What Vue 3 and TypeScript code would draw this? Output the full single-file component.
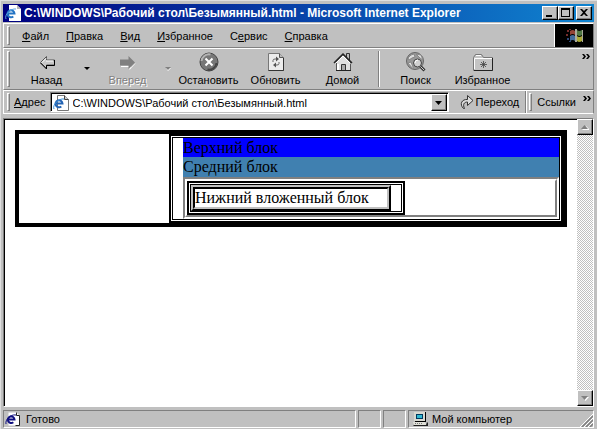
<script setup lang="ts">
import { ref } from 'vue'

interface MenuEntry {
  before: string
  key: string
  after: string
}

const path = 'C:\\WINDOWS\\Рабочий стол\\Безымянный.html'
const address = ref(path)
const menu: MenuEntry[] = [
  { before: '', key: 'Ф', after: 'айл' },
  { before: '', key: 'П', after: 'равка' },
  { before: '', key: 'В', after: 'ид' },
  { before: '', key: 'И', after: 'збранное' },
  { before: 'С', key: 'е', after: 'рвис' },
  { before: '', key: 'С', after: 'правка' },
]
</script>

<template>
  <div class="window">
    <header class="title">
      <svg class="doc" viewBox="0 0 16 16" width="16" height="16">
        <path d="M4 0h8l4 4v12H4z" fill="#fff" />
        <path d="M12 0v4h4z" fill="#b8b8b8" />
        <path d="M3 8.500h6.500a3.500 3.500 0 1 0-1.200 3" fill="none" stroke="#2474c4" stroke-width="2" />
        <path d="M1 14C-1 10 6 3 11 4" fill="none" stroke="#5aa4e0" stroke-width="1" />
      </svg>
      <h1>{{ path }} - Microsoft Internet Explorer</h1>
      <div class="caption">
        <button class="raised" aria-label="Свернуть"><svg viewBox="0 0 12 10" width="12" height="10"><path d="M2 7h6v2H2z" /></svg></button>
        <button class="raised" aria-label="Развернуть"><svg viewBox="0 0 12 10" width="12" height="10"><path d="M1 0h9v9H1zM2 2v6h7V2z" fill-rule="evenodd" /></svg></button>
        <button class="raised close" aria-label="Закрыть"><svg viewBox="0 0 12 10" width="12" height="10"><path d="M2 1h2l2 2 2-2h2L7 4.500 10 8H8L6 6 4 8H2l3-3.500z" /></svg></button>
      </div>
    </header>

    <nav class="menu">
      <i class="grip"></i>
      <button v-for="m in menu" :key="m.key + m.after">{{ m.before }}<u>{{ m.key }}</u>{{ m.after }}</button>
      <div class="throbber">
        <svg viewBox="0 0 38 22" width="38" height="22">
          <g opacity=".85">
            <path d="M12 5h2v2h-2zM11 9h2v2h-2zM14 4h2v1h-2z" fill="#8a3434" />
            <path d="M12 13h2v2h-2zM14 16h2v1h-2z" fill="#345490" />
            <path d="M15 6q3-2 5 0v4q-2-2-5 0z" fill="#b05040" />
            <path d="M22 5q2 2 5 0v5q-3 2-5 0z" fill="#609050" />
            <path d="M15 11q3-2 5 0v5q-2-2-5 0z" fill="#5080b8" />
            <path d="M22 11q2 2 5 0v5q-3 2-5 0z" fill="#c8c840" />
            <path d="M20 4h2v13h-2zM27 5h1v12h-1z" fill="#c8c8b8" />
          </g>
        </svg>
      </div>
    </nav>

    <div class="tools">
      <i class="grip"></i>
      <button class="tool">
        <svg viewBox="0 0 20 20" width="20" height="20">
          <path d="M3.500 10.500l6-6v3.500h8v5h-8v3.500z" fill="#c8c8c8" stroke="#555" />
          <path d="M3.500 11l6 6v-3.500h8V8" fill="none" stroke="#000" />
          <path d="M5 10.500L9 6.500M9 9h7" stroke="#fff" fill="none" />
        </svg>
        Назад
      </button>
      <button class="more" aria-label="Список назад"><svg viewBox="0 0 6 4" width="6" height="4"><path d="M0 0h6L3 3z" /></svg></button>
      <button class="tool off" disabled>
        <svg viewBox="0 0 20 20" width="20" height="20">
          <path d="M18 11l-6.500 7v-3H3v-1h9.500v2l4-4z" fill="#fff" />
          <path d="M17 10.500L10.500 4v3.500H2v6h8.500V17z" fill="#808080" />
        </svg>
        Вперед
      </button>
      <button class="more off" disabled aria-label="Список вперед"><svg viewBox="0 0 6 4" width="6" height="4"><path d="M1 1h5L3 4z" fill="#fff" /><path d="M0 0h6L3 3z" fill="#808080" /></svg></button>
      <button class="tool">
        <svg viewBox="0 0 20 20" width="20" height="20">
          <circle cx="10" cy="10" r="9" fill="#777" stroke="#444" />
          <path d="M2.500 9a7.500 7.500 0 0 1 9-6.500" stroke="#b4b4b4" fill="none" stroke-width="2" />
          <path d="M17.500 11a7.500 7.500 0 0 1-9 6.500" stroke="#444" fill="none" stroke-width="2" />
          <path d="M6.500 6.500l7 7M13.500 6.500l-7 7" stroke="#fff" stroke-width="2" />
        </svg>
        Остановить
      </button>
      <button class="tool">
        <svg viewBox="0 0 20 20" width="20" height="20">
          <path d="M2.500 1.500h11l4 4v13h-15z" fill="#ececec" stroke="#777" />
          <path d="M2.500 18.500h15V6" fill="none" stroke="#333" />
          <path d="M13.500 1.500v4h4" fill="#bbb" stroke="#555" />
          <path d="M7 10V8.500Q7 7 9 7h1M13 10v1.500q0 1.500-2 1.500h-1" fill="none" stroke="#666" />
          <path d="M10 4.500l3 2.500-3 2.500zM10 10.500L7 13l3 2.500z" fill="#555" />
        </svg>
        Обновить
      </button>
      <button class="tool">
        <svg viewBox="0 0 20 20" width="20" height="20">
          <path d="M13.500 1.500h3v7h-3z" fill="#bbb" stroke="#333" />
          <path d="M3.500 10v8.500h14V10l-7-7z" fill="#e0e0e0" stroke="#555" />
          <path d="M1 11l9-9 9 9" fill="none" stroke="#222" stroke-width="1.500" />
          <path d="M2.500 11.500l7.500-7.500 7.500 7.500" fill="none" stroke="#fff" />
          <path d="M8.500 12.500h4v6h-4z" fill="#aaa" stroke="#333" />
          <path d="M5 12v6" stroke="#fff" stroke-width="2" />
          <path d="M3 18.500h15" stroke="#222" />
        </svg>
        Домой
      </button>
      <i class="rule"></i>
      <button class="tool">
        <svg viewBox="0 0 20 20" width="20" height="20">
          <circle cx="9" cy="9" r="8.500" fill="#999" stroke="#666" />
          <path d="M2 6q3-4 6-4l1 3-3 1-3 2zM10 2l5 1 2 5-3-2zM2 11l3-1 2 5v2z" fill="#ddd" stroke="#888" />
          <circle cx="11.500" cy="11" r="4" fill="#d0d0d0" stroke="#444" />
          <path d="M9 11a3 3 0 0 1 3-3" fill="none" stroke="#fff" />
          <path d="M14.500 14.500l4 4" stroke="#333" stroke-width="3" />
          <path d="M14.500 14.500l3.500 3.500" stroke="#ccc" />
        </svg>
        Поиск
      </button>
      <button class="tool">
        <svg viewBox="0 0 20 20" width="20" height="20">
          <path d="M.500 18.500v-13l2-3h6l2 3h9v13z" fill="#c4c4c4" stroke="#777" />
          <path d="M1.500 17V6.500H19M3 3.500h5" fill="none" stroke="#fff" />
          <path d="M1 18.500h18.500V6" fill="none" stroke="#222" />
          <path d="M10.500 9v7M7 12.500h7M8 10l5 5M13 10l-5 5" stroke="#444" stroke-width=".8" />
        </svg>
        Избранное
      </button>
      <button class="chev" aria-label="Другие кнопки"><svg viewBox="0 0 8 5" width="8" height="5"><path d="M0 0h2l2 2.500L2 5H0l2-2.500zM4 0h2l2 2.500L6 5H4l2-2.500z" /></svg></button>
    </div>

    <form class="address" @submit.prevent>
      <i class="grip"></i>
      <label for="url"><u>А</u>дрес</label>
      <div class="field">
        <svg class="doc" viewBox="0 0 16 16" width="16" height="16">
          <path d="M4.500.500h7l4 4v11h-11z" fill="#fff" stroke="#777" />
          <path d="M11.500.500v4h4" fill="#ccc" stroke="#444" />
          <path d="M3 8.500h6.500a3.500 3.500 0 1 0-1.200 3" fill="none" stroke="#2464b4" stroke-width="2" />
          <path d="M1 14C-1 10 6 3 11 4" fill="none" stroke="#3a90d8" stroke-width="1" />
        </svg>
        <input id="url" v-model="address" type="text" spellcheck="false" />
        <button type="button" class="raised drop" aria-label="Журнал адресов"><svg viewBox="0 0 7 4" width="7" height="4"><path d="M0 0h7L3.500 4z" /></svg></button>
      </div>
      <button type="submit" class="go">
        <svg viewBox="0 0 14 16" width="14" height="16">
          <path d="M3.500 14.500C-1 10 2 5 7.500 5.500v-4l5.500 5-5.500 5v-3.500C4 8 2.500 10.500 4.500 14.500z" fill="#ddd" stroke="#333" />
        </svg>
        Переход
      </button>
      <i class="edge"></i>
      <i class="grip"></i>
      <a class="links" href="#">Ссылки</a>
      <button type="button" class="chev" aria-label="Другие ссылки"><svg viewBox="0 0 8 5" width="8" height="5"><path d="M0 0h2l2 2.500L2 5H0l2-2.500zM4 0h2l2 2.500L6 5H4l2-2.500z" /></svg></button>
    </form>

    <div class="view">
      <main>
        <div class="outer">
          <div class="double column">
            <div class="top">Верхний блок</div>
            <div class="middle">Средний блок</div>
            <div class="groove"><div class="groove-in">
              <div class="double nested">
                <div class="ridge"><div class="ridge-in">Нижний вложенный блок</div></div>
              </div>
            </div></div>
          </div>
        </div>
      </main>
      <div class="scroll">
        <button class="raised" disabled aria-label="Вверх"><svg viewBox="0 0 8 5" width="8" height="5"><path d="M1 5h7v-1L5 1z" fill="#fff" /><path d="M0 4h7L3.500 0z" fill="#808080" /></svg></button>
        <button class="raised" disabled aria-label="Вниз"><svg viewBox="0 0 8 5" width="8" height="5"><path d="M1 1h7L4.500 5z" fill="#fff" /><path d="M0 0h7L3.500 4z" fill="#808080" /></svg></button>
      </div>
    </div>

    <footer class="status">
      <div class="pane message">
        <svg viewBox="0 0 16 16" width="16" height="16">
          <path d="M3.500 1.500h8l3 3v10h-11z" fill="#fff" />
          <path d="M11.500 1.500v3h3v10h-4" fill="none" stroke="#222" />
          <path d="M3 8.500h6.500a3.300 3.300 0 1 0-1.200 2.800" fill="none" stroke="#101080" stroke-width="2" />
          <path d="M1 13C0 9 5 3 11 4" fill="none" stroke="#101080" />
        </svg>
        Готово
      </div>
      <div class="pane small"></div>
      <div class="pane small"></div>
      <div class="pane zone">
        <svg viewBox="0 0 16 16" width="16" height="16">
          <path d="M2 1h11v9H2z" fill="#d8d8d0" />
          <path d="M13 1h1v10H3v-1h10z" />
          <path d="M4 3h7v5H4z" fill="#003860" />
          <path d="M5 4h5v3H5z" fill="#30b8d0" />
          <path d="M1 11h12l2 3H2z" fill="#e0e0d8" />
          <path d="M1 14h13l1-3 1 1v3H2z" fill="#222" />
          <path d="M3 12.500h8" stroke="#777" stroke-dasharray="1 1" />
        </svg>
        <span>Мой компьютер</span>
        <svg class="size" viewBox="0 0 13 13" width="13" height="13">
          <path d="M0 13L13 0M4 13l9-9M8 13l5-5" stroke="#fff" />
          <path d="M2 13L13 2M6 13l7-7M10 13l3-3" stroke="#808080" stroke-width="1.500" />
        </svg>
      </div>
    </footer>
  </div>
</template>

<style>
body {
  margin: 0;
  background: #c0c0c0;
}
</style>

<style scoped>
* {
  box-sizing: border-box;
}

.window {
  display: flex;
  flex-direction: column;
  height: 100vh;
  padding: 3px 3px 1px 2px;
  border-top: 1px solid #dfdfdf;
  border-left: 1px solid #dfdfdf;
  background: #c0c0c0;
  color: #000;
  font: 11px/14px "Liberation Sans", Arial, sans-serif;
  overflow: hidden;
}

button {
  margin: 0;
  padding: 0;
  border: 0;
  background: none;
  color: inherit;
  font: inherit;
}

svg {
  display: block;
  flex: none;
}

.raised {
  display: flex;
  align-items: center;
  justify-content: center;
  background: #c0c0c0;
  border: 1px solid;
  border-color: #fff #000 #000 #fff;
  box-shadow: inset -1px -1px #808080;
}

.grip {
  flex: none;
  align-self: stretch;
  width: 3px;
  margin: 2px 0 2px 4px;
  border: 1px solid;
  border-color: #fff #808080 #808080 #fff;
}

.title {
  display: flex;
  align-items: center;
  flex: none;
  height: 18px;
  padding: 0 2px;
  background: linear-gradient(90deg, #000080, #1084d0);
  color: #fff;
}

h1 {
  flex: 1;
  margin: 0 0 0 3px;
  font-size: 12px;
  font-weight: bold;
  line-height: 18px;
  white-space: nowrap;
  overflow: hidden;
}

.caption {
  display: flex;
}

.caption .raised {
  width: 16px;
  height: 14px;
}

.caption .close {
  margin-left: 2px;
}

.menu {
  display: flex;
  align-items: center;
  gap: 17px;
  flex: none;
  height: 25px;
  margin-top: 1px;
  border: 1px solid;
  border-color: #fff #808080 #808080 #fff;
}

.menu .grip {
  margin-right: -5px;
  margin-left: 3px;
}

.menu .throbber {
  display: flex;
  align-items: center;
  justify-content: center;
  align-self: stretch;
  width: 39px;
  margin-left: auto;
  border-left: 1px solid #fff;
  background: #000;
}

.tools {
  display: flex;
  flex: none;
  height: 42px;
  border: 1px solid;
  border-color: #fff #808080 #808080 #fff;
}

.tools .grip {
  margin-left: 3px;
  margin-right: 3px;
}

.tool {
  display: flex;
  flex-direction: column;
  align-items: center;
  gap: 1px;
  width: 67px;
  padding-top: 3px;
  white-space: nowrap;
}

.off {
  color: #808080;
  text-shadow: 1px 1px #fff;
}

.more {
  display: flex;
  align-items: center;
  justify-content: center;
  width: 14px;
}

.rule,
.edge {
  width: 2px;
  margin: 2px;
  border-left: 1px solid #808080;
  border-right: 1px solid #fff;
}

.chev {
  align-self: flex-start;
  margin-left: auto;
  padding: 5px 3px;
}

.address {
  display: flex;
  align-items: center;
  flex: none;
  height: 24px;
  border: 1px solid;
  border-color: #fff #808080 #fff #fff;
}

.address > .grip {
  margin-left: 3px;
}

label {
  margin: 0 4px;
}

.field {
  display: flex;
  align-items: center;
  flex: 1;
  min-width: 0;
  height: 20px;
  border: 1px solid;
  border-color: #808080 #fff #fff #808080;
  box-shadow: inset 1px 1px #000;
  background: #fff;
  padding: 1px 1px 0 2px;
}

input {
  flex: 1;
  min-width: 0;
  margin: 0;
  padding: 0 4px;
  border: 0;
  outline: 0;
  background: none;
  color: inherit;
  font: inherit;
}

.drop {
  width: 16px;
  height: 17px;
}

.go {
  display: flex;
  align-items: center;
  gap: 2px;
  margin: 0 6px 0 11px;
}

.edge {
  align-self: stretch;
  margin: 0;
}

.address .edge + .grip {
  margin: 2px 5px 2px 2px;
}

.links {
  color: inherit;
  text-decoration: none;
}

.address .chev {
  margin-left: 4px;
  padding-right: 2px;
}

.view {
  display: flex;
  flex: 1;
  min-height: 0;
  margin-top: 4px;
  border: 1px solid;
  border-color: #808080 #fff #fff #808080;
}

main {
  flex: 1;
  min-width: 0;
  padding: 10px;
  border-top: 1px solid #000;
  border-left: 1px solid #000;
  background: #fff;
  font: 16px/19px "Liberation Serif", "Times New Roman", serif;
}

.outer {
  padding-left: 150px;
  border: 4px solid #000;
}

.double {
  padding: 2px;
  border: 2px solid #000;
  box-shadow: inset 0 0 0 1px #fff, inset 0 0 0 2px #000;
}

.column {
  padding-left: 12px;
}

.top {
  background: #00f;
}

.middle {
  padding-bottom: 1px;
  background: #4080b0;
}

.groove {
  border: 2px solid;
  border-color: #808080 #fff #fff #808080;
}

.groove-in {
  border: 2px solid;
  border-color: #fff #808080 #808080 #fff;
}

.nested {
  width: 218px;
}

.ridge {
  width: 200px;
  border: 2px solid;
  border-color: #c0c0c0 #000 #000 #c0c0c0;
}

.ridge-in {
  border: 2px solid;
  border-color: #000 #c0c0c0 #c0c0c0 #000;
  line-height: 18px;
  white-space: nowrap;
}

.scroll {
  display: flex;
  flex-direction: column;
  justify-content: space-between;
  width: 16px;
  background: repeating-conic-gradient(#fff 0 25%, #c0c0c0 0 50%) 0 0 / 2px 2px;
}

.scroll .raised {
  width: 16px;
  height: 16px;
}

.status {
  display: flex;
  gap: 2px;
  flex: none;
  height: 18px;
  margin-top: 3px;
}

.pane {
  display: flex;
  align-items: center;
  border: 1px solid;
  border-color: #808080 #fff #fff #808080;
}

.message {
  flex: 1;
  gap: 5px;
  padding-left: 1px;
}

.small {
  width: 23px;
}

.zone {
  gap: 4px;
  width: 186px;
  padding-left: 3px;
}

.size {
  align-self: flex-end;
  margin-left: auto;
}
</style>
